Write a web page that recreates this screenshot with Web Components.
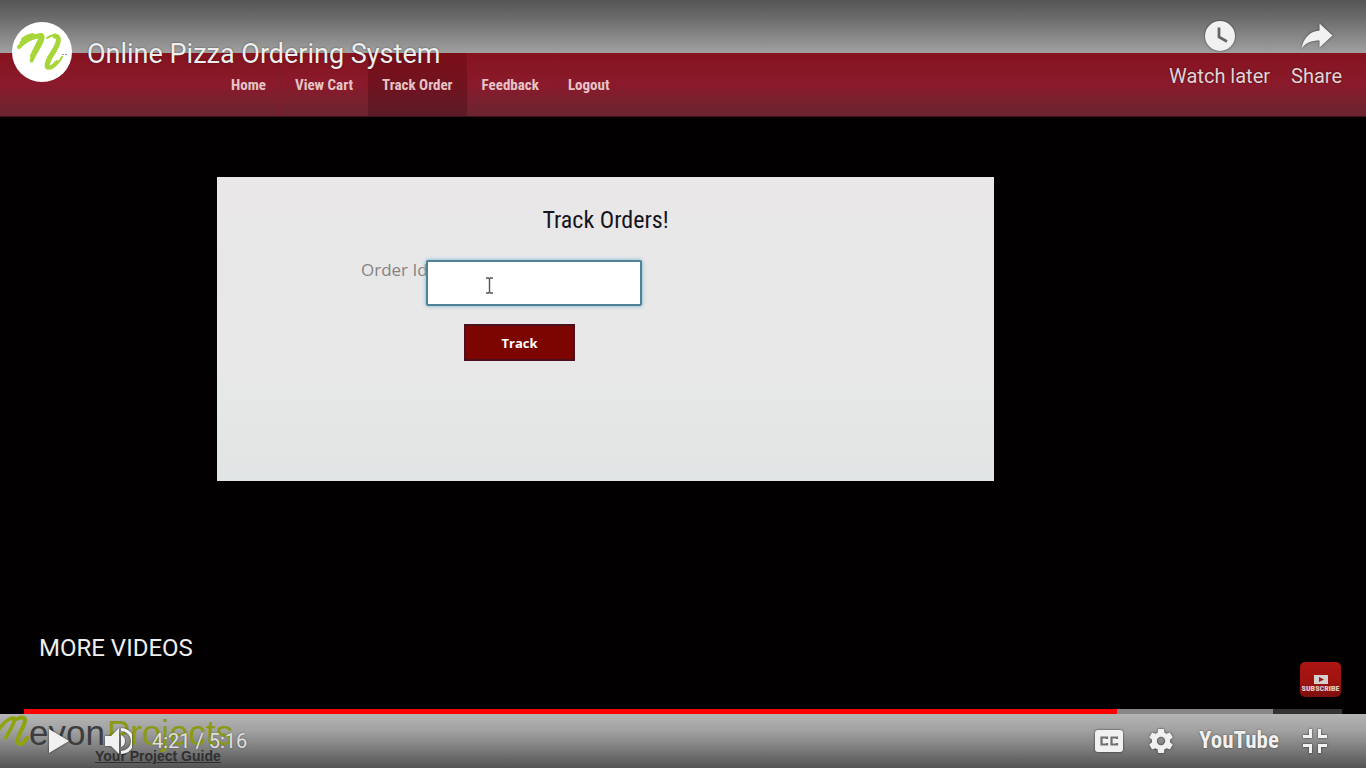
<!DOCTYPE html>
<html lang="en">
<head>
<meta charset="utf-8">
<title>Online Pizza Ordering System</title>
<style>
  body { margin: 0; background: #000; font-family: Roboto, sans-serif; }
</style>
</head>
<body>
<video-player>
  <pizza-page slot="frame"></pizza-page>
  <player-header slot="header" heading="Online Pizza Ordering System"></player-header>
  <player-controls slot="controls"></player-controls>
</video-player>

<script>
const define = (name, html, setup) => customElements.define(name, class extends HTMLElement {
  connectedCallback() {
    if (this.shadowRoot) return;
    const root = this.attachShadow({ mode: 'open' });
    const t = document.createElement('template');
    t.innerHTML = html;
    root.append(t.content.cloneNode(true));
    if (setup) setup(this, root);
  }
});

define('video-player', `
<style>
  :host { display: grid; min-height: 100vh; grid-template: minmax(0, 1fr) / minmax(0, 1fr); overflow: hidden; }
  .frame, .chrome { grid-area: 1 / 1; display: flex; flex-direction: column; }
  .chrome { position: relative; justify-content: space-between; pointer-events: none; }
  ::slotted([slot=frame]) { flex: 1; }
  ::slotted([slot=header]), ::slotted([slot=controls]) { pointer-events: auto; }
</style>
<div class="frame"><slot name="frame"></slot></div>
<div class="chrome"><slot name="header"></slot><slot name="controls"></slot></div>`);

/* The recorded web page playing in the video */
define('pizza-page', `
<style>
  :host { display: flex; flex-direction: column; background: #020001; }
  .top { height: 53px; background: linear-gradient(#545454, #707070 40%, #a0a0a0); }
  main { flex: 1; padding: 60px 217px 0; }
</style>
<div class="top"></div>
<site-nav></site-nav>
<main><track-form></track-form></main>
<site-footer></site-footer>`);

define('site-nav', `
<style>
  :host { display: block; background: linear-gradient(#86131e, #8a1a2c 50%, #6a2530); border-bottom: 1px solid #3c1218; }
  nav { display: flex; height: 63px; padding-left: 217px; }
  a { display: flex; align-items: center; box-sizing: border-box; padding: 0 14px; color: #e6c3c6; text-decoration: none;
      font: bold 15px "Roboto Condensed", "Liberation Sans Narrow", sans-serif; border-right: 1px solid #7d1c2b; }
  a:last-child { border: 0; }
  a.on { background: linear-gradient(#7c0f18, #701320 55%, #5a1c27); }
</style>
<nav>
  <a href="#home">Home</a><a href="#cart">View Cart</a><a href="#track" class="on">Track Order</a><a href="#feedback">Feedback</a><a href="#logout">Logout</a>
</nav>`);

define('track-form', `
<style>
  :host { display: block; max-width: 777px; height: 304px; background: linear-gradient(#e9e7e8, #e8e8e8 60%, #e2e5e5); }
  form { display: flex; flex-direction: column; }
  h1 { margin: 0; padding-top: 26px; text-align: center; font: 24px/34px "Roboto Condensed", "Liberation Sans Narrow", sans-serif; color: #15151d; }
  .row { display: flex; align-items: flex-start; margin-top: 23px; padding-left: 144px; }
  label { font: 17px/20px "Open Sans", sans-serif; color: #858384; width: 65px; white-space: nowrap; }
  .field { display: grid; }
  .field > * { grid-area: 1 / 1; }
  input { box-sizing: border-box; width: 216px; height: 46px; padding: 0 12px; border: 2px solid #4f8197; border-radius: 2px; background: #fff; outline: 0; box-shadow: 0 0 4px #72b4d2; }
  svg { place-self: center start; margin: 4px 0 0 59px; position: relative; pointer-events: none; }
  button { margin: 18px 0 0 247px; width: 111px; height: 37px; border: 2px solid #4b0f1d; background: #7d0500; color: #fff; font: bold 13px "Open Sans", sans-serif; }
</style>
<form>
  <h1>Track Orders!</h1>
  <div class="row">
    <label for="order">Order Id</label>
    <div class="field"><input id="order" type="text">
      <svg width="9" height="17" viewBox="0 0 9 17" fill="none" stroke="#555" stroke-width="1.4"><path d="M1 1h2.5l1 1 1-1H8M4.500 2v13M1 16h2.500l1-1 1 1H8"/></svg>
    </div>
  </div>
  <button type="button">Track</button>
</form>`);

define('site-footer', `
<style>
  :host { display: block; height: 54px; overflow: hidden; background: linear-gradient(#b4b4b4, #a2a2a2 30%, #7c7c7c 65%, #545454); font-family: "Liberation Sans", Arial, sans-serif; }
  .brand { display: flex; height: 34px; font-size: 35px; line-height: 37px; color: #3d3d3f; }
  .brand span { color: #8a9a12; margin-left: 2px; }
  svg { flex: none; }
  p { margin: 0; padding-left: 95px; font-size: 14px; line-height: 16px; font-weight: bold; text-decoration: underline; color: #303032; }
</style>
<div class="brand">
  <svg width="29" height="35" viewBox="0 0 29 35" fill="none" stroke="#8fa30c" stroke-linecap="round" stroke-linejoin="round"><path stroke-width="3.500" d="M-2 17C3 9 9 4 14 4C16 8 9 17 6 24"/><path stroke-width="4" d="M17 5C21 3 25 3 25 6C25 13 16 22 18 29C20 32 24 29 27 24"/></svg>
  evon<span>Projects</span>
</div>
<p>Your Project Guide</p>`);

define('channel-avatar', `
<style>
  :host { display: block; width: 60px; height: 60px; border-radius: 50%; background: #fff; overflow: hidden; }
  a, svg { display: block; }
</style>
<a href="#channel" aria-label="Channel"><svg width="60" height="60" viewBox="0 0 60 60" fill="none" stroke="#a6d638" stroke-linecap="round" stroke-linejoin="round">
  <path stroke-width="4" d="M7 25C12 19 21 14 30 13.500C33 17 24 28 19.500 38.500"/>
  <path stroke-width="5" d="M10 21C16 16 23 14 29 13.500M29 16C27 22 23 28 20.500 34"/>
  <path stroke-width="2" d="M10 17C13 14 17 13 21 12M35 16C38 14 41 12.500 44 13M41 45C45 42 48 39 50 35"/>
  <path stroke-width="5" d="M43 14C49 15 46 22 42 29C38 35 34 41 35.500 45"/>
  <path stroke-width="4" d="M35 44C37 48 42 44 45 40"/>
  <path stroke="none" fill="#999" d="M50 32h2v1h-2zM53 32h2v1h-2z"/>
</svg></a>`);

define('player-header', `
<style>
  :host { display: flex; align-items: flex-start; padding: 18px 24px 0 12px; color: #eee; text-shadow: 0 0 2px #0008; }
  channel-avatar { margin: 4px 15px 0 0; }
  h2 { flex: 1; margin: 0; padding-top: 20px; font: 27px/32px Roboto, sans-serif; }
  .actions { display: flex; gap: 21px; }
  button { display: flex; flex-direction: column; align-items: center; gap: 10px; padding: 0; border: 0; background: none; color: #e3d3d5; font: 20px/24px Roboto, sans-serif; text-shadow: inherit; white-space: nowrap; }
  svg { filter: drop-shadow(0 0 1px #0009); }
</style>
<channel-avatar></channel-avatar>
<h2></h2>
<div class="actions">
  <button><svg width="36" height="36" viewBox="0 0 36 36"><circle cx="18" cy="18" r="15" fill="#f1f1f1"/><path d="M17 9.500v9.500l8 4.500" fill="none" stroke="#666" stroke-width="2.800"/></svg>Watch later</button>
  <button><svg width="36" height="36" viewBox="0 0 36 36" fill="#f1f1f1"><path d="M20.500 5.500L33.500 17.500 20.500 29.500V22.500C12.500 22.500 7 24.500 2.500 30.500C4.500 20.500 10 13.500 20.500 12.500Z"/></svg>Share</button>
</div>`, (host, root) => { root.querySelector('h2').textContent = host.getAttribute('heading'); });

define('subscribe-badge', `
<style>
  :host { display: block; }
  button { display: flex; flex-direction: column; align-items: center; justify-content: flex-end; box-sizing: border-box; width: 41px; height: 35px; padding: 0 0 3px; border: 0; border-radius: 5px; background: linear-gradient(#ad1511, #9c1310 60%, #7c0e0c); color: #ddc9c8; font: 900 8px/10px "Roboto Condensed", "Liberation Sans Narrow", sans-serif; }
</style>
<button><svg width="14" height="9" viewBox="0 0 14 9"><path fill="#d5cfcd" d="M0 0h14v9H0z"/><path fill="#9e1511" d="M5 2l5 2.500-5 2.500z"/></svg>SUBSCRIBE</button>`);

define('player-controls', `
<style>
  :host { display: block; }
  .upper { display: flex; justify-content: space-between; align-items: flex-end; padding: 0 25px 12px 39px; }
  .more { margin-bottom: 34px; color: #eee; font: 24px/30px Roboto, sans-serif; }
  .seek { display: flex; padding: 0 24px; }
  input { appearance: none; flex: 1; min-width: 0; height: 5px; margin: 0; background: linear-gradient(90deg, #f00 82.9%, #868686 82.9% 94.8%, #333 94.8%); }
  input::-webkit-slider-thumb { appearance: none; width: 0; height: 0; }
  .bar { display: flex; align-items: center; height: 54px; padding: 0 39px 0 48px; color: #e0e0e0; }
  button { display: flex; padding: 0; border: 0; background: none; }
  svg { display: block; filter: drop-shadow(0 0 1px #000a); }
  .volume { margin-left: 35px; }
  time { flex: 1; margin-left: 20px; font-size: 20px; line-height: 24px; text-shadow: 0 0 2px #0006; }
  .right { display: flex; align-items: center; gap: 26px; }
  .yt { width: 78px; color: #f1f1f1; text-decoration: none; text-align: center; font: bold 23px/28px "Roboto Condensed", "Liberation Sans Narrow", sans-serif; text-shadow: 0 0 2px #0009; }
</style>
<div class="upper"><div class="more">MORE VIDEOS</div><subscribe-badge></subscribe-badge></div>
<div class="seek"><input type="range" min="0" max="316" value="261" aria-label="Seek"></div>
<div class="bar">
  <button aria-label="Play"><svg width="22" height="26" viewBox="0 0 22 26" fill="#f1f1f1"><path d="M1 1v24l20-12z"/></svg></button>
  <button class="volume" aria-label="Mute"><svg width="27" height="28" viewBox="0 0 27 28" fill="#f1f1f1"><path d="M0 9h6l8-8v26l-8-8H0z"/><path d="M16 8v12a6.500 6.500 0 0 0 0-12z"/><path fill="none" stroke="#f1f1f1" stroke-width="3" d="M16 2.500a11.500 11.500 0 0 1 0 23"/></svg></button>
  <time>4:21 / 5:16</time>
  <div class="right">
    <button aria-label="Subtitles"><svg width="28" height="22" viewBox="0 0 28 22"><rect width="28" height="22" rx="3" fill="#f1f1f1"/><path d="M12 9V7.500H6.500v7H12V13M22 9V7.500h-5.500v7H22V13" fill="none" stroke="#707070" stroke-width="2.200"/></svg></button>
    <button aria-label="Settings"><svg width="24" height="24" viewBox="2 2 20 20" fill="#f1f1f1"><path d="M19.430 12.980c.04-.32.07-.64.07-.98s-.03-.66-.07-.98l2.110-1.650c.19-.15.24-.42.12-.64l-2-3.460c-.12-.22-.39-.3-.61-.22l-2.490 1c-.52-.4-1.080-.73-1.690-.98l-.38-2.650A.49.49 0 0 0 14 2h-4c-.25 0-.46.180-.49.420l-.38 2.650c-.61.250-1.170.590-1.690.980l-2.490-1c-.23-.09-.49 0-.61.220l-2 3.460c-.13.220-.07.490.12.640l2.110 1.650c-.04.320-.07.650-.07.980s.03.660.07.980l-2.110 1.650c-.19.150-.24.420-.12.640l2 3.460c.12.220.39.300.61.220l2.490-1c.52.400 1.080.730 1.690.980l.38 2.650c.03.240.24.420.49.420h4c.25 0 .46-.180.49-.420l.38-2.650c.61-.250 1.170-.590 1.690-.980l2.490 1c.23.090.49 0 .61-.220l2-3.460c.12-.220.07-.490-.12-.640l-2.110-1.650zM12 15.500a3.500 3.500 0 1 1 0-7 3.500 3.500 0 0 1 0 7z"/></svg></button>
    <a class="yt" href="#youtube">YouTube</a>
    <button aria-label="Exit full screen"><svg width="24" height="24" viewBox="0 0 24 24" fill="none" stroke="#f1f1f1" stroke-width="3"><path d="M0 7.500h7.500V0M16.500 0v7.500H24M0 16.500h7.500V24M16.500 24v-7.500H24"/></svg></button>
  </div>
</div>`);
</script>
</body>
</html>
